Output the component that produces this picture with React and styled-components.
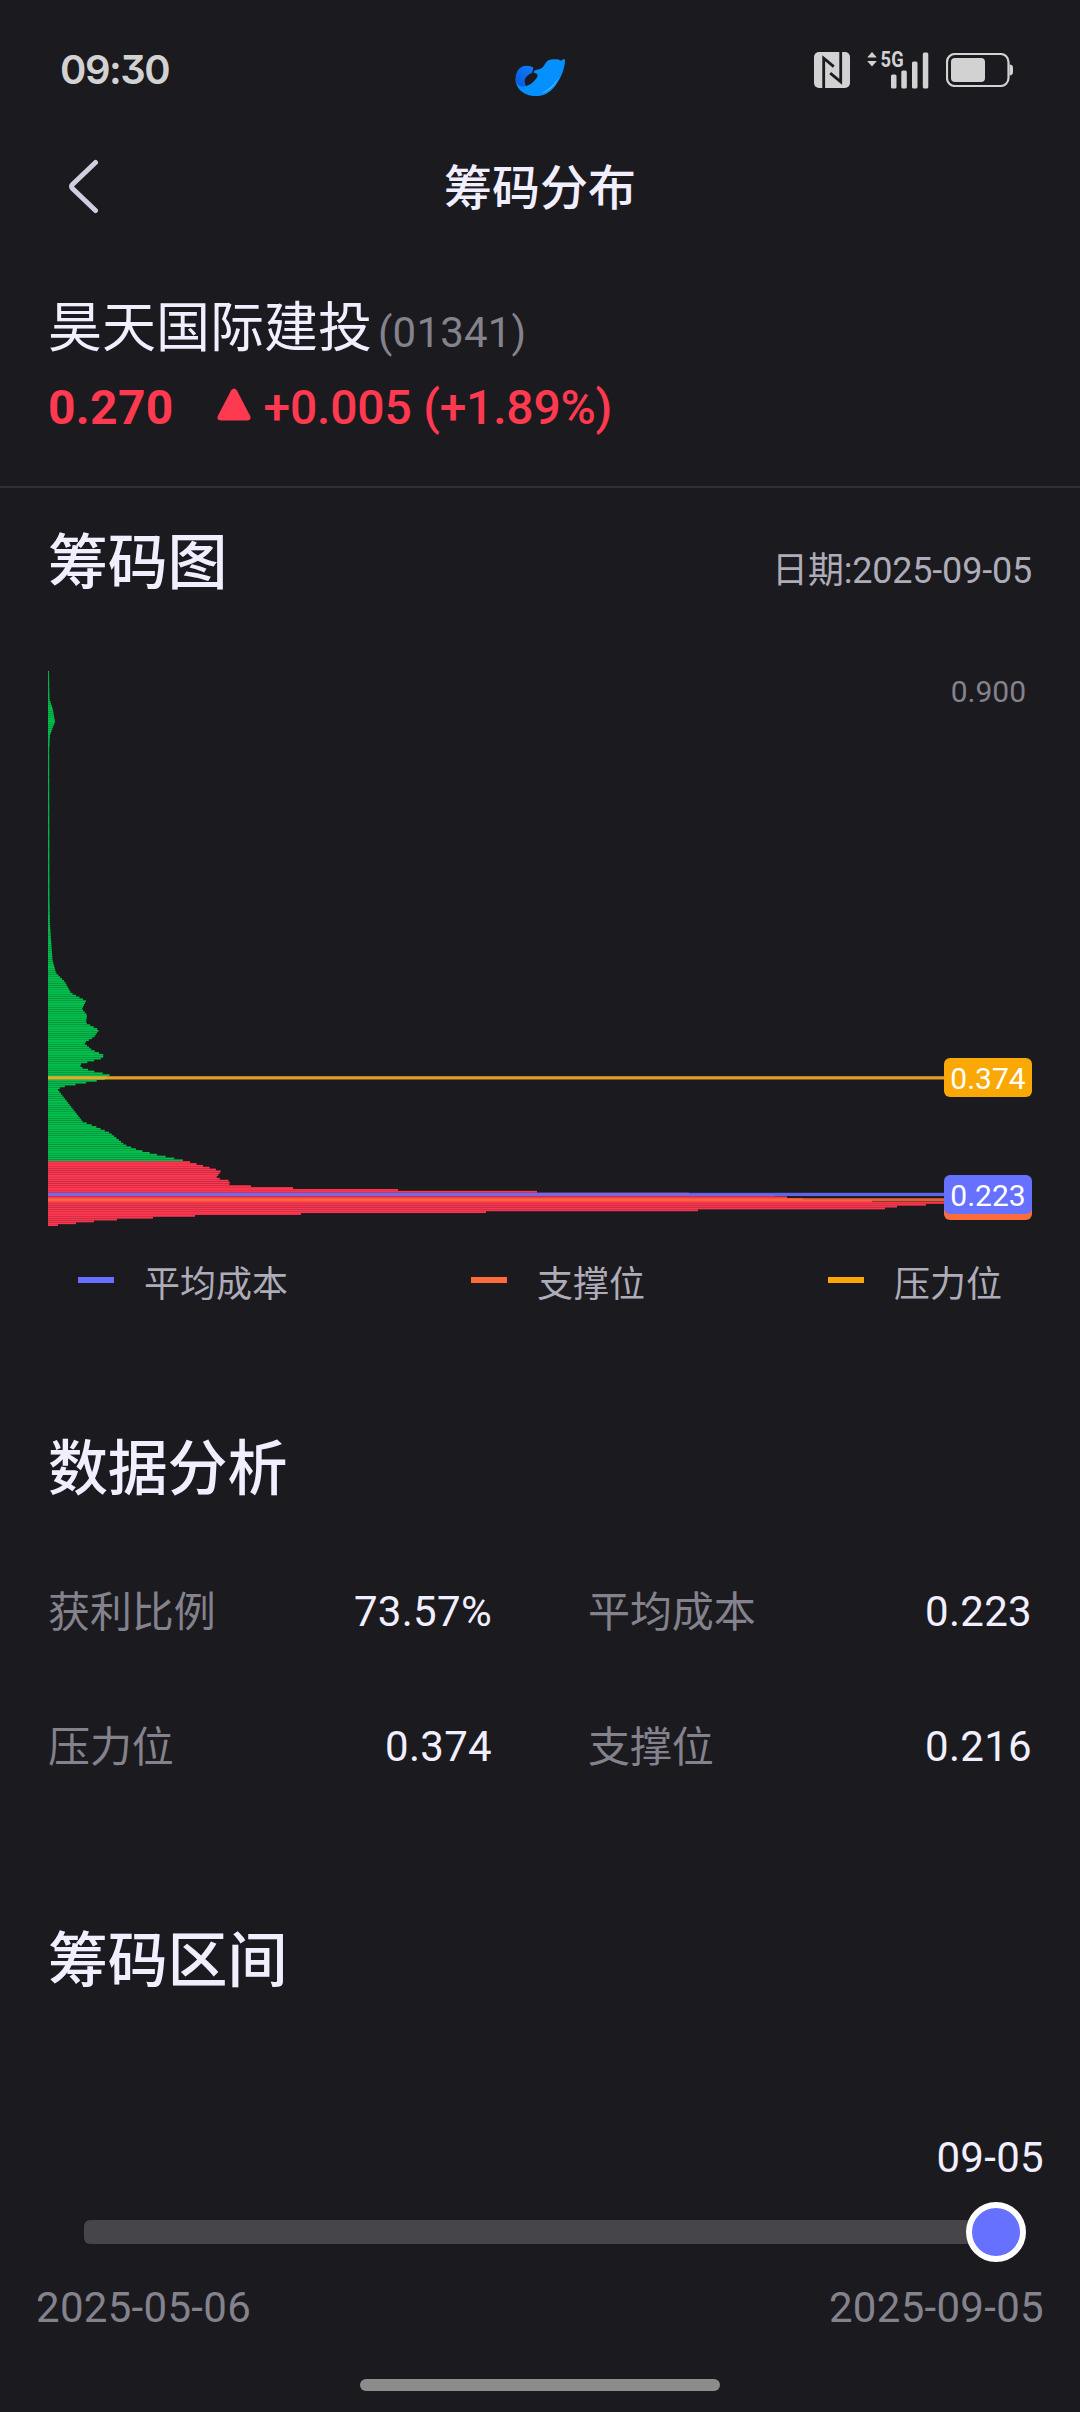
import React from "react";
import styled, { createGlobalStyle } from "styled-components";

// [offset from the chart top, bar length]
const profile = [
  [0, 1], [28, 1.5], [31, 2.5], [39, 5], [51, 7], [56, 5], [64, 2], [79, 1.2],
  [229, 1.5], [254, 2], [289, 4.5], [302, 8], [311, 17], [322, 23], [330, 38],
  [338, 34], [344, 39], [352, 38], [359, 51], [366, 46], [372, 36], [379, 44],
  [384, 55.5], [387, 55], [393, 33], [396, 32], [400, 44], [404, 62],
  [408.5, 56], [412, 36], [416, 13], [419, 10], [451, 35], [455, 46],
  [462, 62], [474, 77], [479, 90], [484, 110], [490, 138], [494, 152],
  [500, 173], [503, 171], [507, 168], [510, 182], [515, 181],
];

// the lowest prices, one length per bar
const tail = [
  203, 245, 350, 489, 641, 727, 739, 755, 824, 960, 878, 849, 837, 650, 438,
  253, 147, 105, 69, 46, 28, 10,
];

const BAR_COUNT = 300;
const PITCH = 555 / BAR_COUNT;
const SPLIT = 490;

const lengthAt = (y) => {
  const i = profile.findIndex((p) => p[0] >= y);
  if (i < 1) return profile[0][1];
  const [y0, w0] = profile[i - 1];
  const [y1, w1] = profile[i];
  return w0 + ((w1 - w0) * (y - y0)) / (y1 - y0);
};

const bars = Array.from({ length: BAR_COUNT }, (_, i) => {
  const y = i * PITCH;
  const t = i - (BAR_COUNT - tail.length);
  return {
    y,
    width: t >= 0 ? tail[t] : lengthAt(y + PITCH / 2),
    color: y < SPLIT ? "#04bf4b" : "#ff3650",
  };
});

const legend = [
  { label: "平均成本", color: "#6671ff" },
  { label: "支撑位", color: "#ff6b39" },
  { label: "压力位", color: "#faa805" },
];

const stats = [
  { label: "获利比例", value: "73.57%" },
  { label: "平均成本", value: "0.223" },
  { label: "压力位", value: "0.374" },
  { label: "支撑位", value: "0.216" },
];

function Logo() {
  return (
    <svg width="51" height="38" viewBox="0 0 51 38">
      <defs>
        <linearGradient id="tail" x1="0" y1="1" x2="0.7" y2="0">
          <stop offset="0" stopColor="#0a55e0" />
          <stop offset="1" stopColor="#0a7cf8" />
        </linearGradient>
      </defs>
      <path
        d="M50 0.2C50.4 9 45 22 38 29.5C32 36 25 37.6 18 37C7 36 0.5 28 0.5 20L8 26C10 28 14 26.500 17 24C20.500 21 23.500 17.500 22.300 15.600C21.500 14 19.500 14 18.500 13.500C19.500 10.500 22 10.800 25 10C29 8.500 29.500 4 33 1.500C36 -0.300 40 0.200 43 0.300C44.500 0.600 45 2 46.500 1.300C47.500 0.800 48 0.200 50 0.200Z"
        fill="#0490ff"
      />
      <path
        d="M0.500 20C0.500 12 5 7 11 6.700C14 6.600 17 7.500 18.500 8.700C17.500 10.500 18 12 16.800 14C13 15.500 10.500 18 9.800 21C9.500 23.500 10 25.500 11.500 27.300C5 28.500 1 26 0.500 20Z"
        fill="url(#tail)"
      />
      <path d="M45 17C40 27 33 33 26 34.500C33 31 40 25 45 17Z" fill="#5cb8ff" />
    </svg>
  );
}

function Nfc() {
  return (
    <svg width="36" height="36" viewBox="0 0 36 36">
      <rect width="36" height="36" rx="5" fill="#d2d2d2" />
      <path
        d="M9.700 36V6.200L19.800 14.600M26.700 0V29.800L16.200 21.200"
        fill="none"
        stroke="#1b1a1f"
        strokeWidth="2.800"
      />
    </svg>
  );
}

function Signal() {
  return (
    <svg width="62" height="54" viewBox="0 -8 62 54">
      <g fill="#d2d2d2">
        <path d="M5 1L9.800 6.500H0.200ZM5 15.500L0.200 10H9.800Z" />
        <rect x="24" y="23.500" width="5.500" height="14" rx="1.500" />
        <rect x="34.300" y="19.500" width="5.500" height="18" rx="1.500" />
        <rect x="45" y="10.500" width="5.500" height="27" rx="1.500" />
        <rect x="55.800" y="1.500" width="5.500" height="36" rx="1.500" />
        <text
          x="13.500"
          y="16.200"
          fontFamily="Roboto"
          fontWeight="700"
          fontSize="21.500"
          textLength="23.500"
          lengthAdjust="spacingAndGlyphs"
        >
          5G
        </text>
      </g>
    </svg>
  );
}

function Battery() {
  return (
    <svg width="68" height="34" viewBox="0 0 68 34">
      <rect x="1" y="1" width="61.500" height="32" rx="8" fill="none" stroke="#d2d2d2" strokeWidth="2.200" />
      <rect x="5" y="5" width="34" height="24" rx="4" fill="#d2d2d2" />
      <path d="M63.500 11.500C66 11.500 67 13 67 15V19C67 21 66 22.500 63.500 22.500Z" fill="#d2d2d2" />
    </svg>
  );
}

export default function App() {
  return (
    <>
      <GlobalStyle />
      <Screen>
        <StatusBar>
          <Clock>09:30</Clock>
          <Logo />
          <StatusIcons>
            <Nfc />
            <Signal />
            <Battery />
          </StatusIcons>
        </StatusBar>

        <Header>
          <BackButton aria-label="返回">
            <svg width="32" height="56" viewBox="0 0 32 56">
              <path
                d="M27.500 3.500L4.500 25.500Q2.700 27.500 4.500 29.500L27.500 51.500"
                fill="none"
                stroke="#d0cfe2"
                strokeWidth="5"
                strokeLinecap="round"
              />
            </svg>
          </BackButton>
          <h1>筹码分布</h1>
        </Header>

        <Stock>
          <StockName>
            昊天国际建投<span>(01341)</span>
          </StockName>
          <Quote>
            <strong>0.270</strong>
            <svg width="34" height="33" viewBox="0 0 34 33">
              <path
                d="M14.200 2.300Q17 -1.500 19.800 2.300L33.200 28Q34.600 32.500 30 32.500H4Q-0.600 32.500 0.800 28Z"
                fill="#ff3950"
              />
            </svg>
            <span>+0.005 (+1.89%)</span>
          </Quote>
        </Stock>

        <ChartHead>
          <Heading>筹码图</Heading>
          <DateText>日期:2025-09-05</DateText>
        </ChartHead>

        <ChartBox>
          <svg width="984" height="555" viewBox="0 0 984 555">
            {bars.map((b) => (
              <rect key={b.y} x="0" y={b.y} width={b.width} height={PITCH} fill={b.color} />
            ))}
            <rect y="405.200" width="900" height="3.300" fill="#faa92a" opacity="0.900" />
            <rect y="527.200" width="900" height="3.300" fill="#ff6b39" opacity="0.880" />
            <rect y="521.800" width="900" height="3.300" fill="#6671ff" opacity="0.880" />
          </svg>
          <MaxPrice>0.900</MaxPrice>
          <PriceTag $top={387} $color="#faa805">0.374</PriceTag>
          <PriceTag $top={510} $color="#ff6b39" />
          <PriceTag $top={504} $color="#6671ff">0.223</PriceTag>
        </ChartBox>

        <Legend>
          {legend.map((item) => (
            <LegendItem key={item.label} $color={item.color}>
              <i />
              {item.label}
            </LegendItem>
          ))}
        </Legend>

        <Section>
          <Heading>数据分析</Heading>
        </Section>
        <Stats>
          {stats.map((s) => (
            <Stat key={s.label}>
              <span>{s.label}</span>
              <b>{s.value}</b>
            </Stat>
          ))}
        </Stats>

        <Section>
          <Heading>筹码区间</Heading>
        </Section>
        <Range>
          <RangeValue>09-05</RangeValue>
          <Slider>
            <Track />
            <Thumb />
          </Slider>
          <RangeEnds>
            <span>2025-05-06</span>
            <span>2025-09-05</span>
          </RangeEnds>
        </Range>

        <HomeBar />
      </Screen>
    </>
  );
}

const GlobalStyle = createGlobalStyle`
  * {
    box-sizing: border-box;
  }
  body {
    margin: 0;
    background: #1b1a1f;
  }
`;

const Screen = styled.div`
  width: 1080px;
  height: 2412px;
  overflow: hidden;
  display: flex;
  flex-direction: column;
  background: #1b1a1f;
  color: #f1efff;
  font-family: Roboto, "Noto Sans CJK SC", sans-serif;
  font-size: 42px;
  letter-spacing: 0.3px;
  white-space: nowrap;
`;

const StatusBar = styled.div`
  height: 112px;
  padding: 28px 66px 0 60px;
  display: grid;
  grid-template-columns: 1fr 51px 1fr;
  align-items: center;

  > svg {
    margin-top: 16px;
    margin-left: 3px;
  }
`;

const Clock = styled.div`
  font-family: Inter, sans-serif;
  font-weight: 600;
  font-size: 40px;
  line-height: 48px;
  letter-spacing: -1.5px;
  font-feature-settings: "cv09";
  color: #d2d2d2;
`;

const StatusIcons = styled.div`
  display: flex;
  align-items: center;
  justify-content: flex-end;
  gap: 17px;
`;

const Header = styled.header`
  height: 150px;
  padding: 0 68px;
  display: grid;
  grid-template-columns: 32px 1fr 32px;
  align-items: center;

  h1 {
    margin: 0;
    padding-top: 3px;
    font-size: 48px;
    font-weight: 500;
    letter-spacing: 0;
    line-height: 60px;
    text-align: center;
  }
`;

const BackButton = styled.button`
  width: 32px;
  height: 56px;
  padding: 0;
  border: 0;
  background: none;
`;

const Stock = styled.div`
  height: 226px;
  padding: 32px 48px 0;
  border-bottom: 2px solid #313036;
`;

const StockName = styled.div`
  height: 78px;
  line-height: 70px;
  font-size: 54px;
  letter-spacing: 0;

  span {
    margin-left: 6px;
    font-size: 42px;
    letter-spacing: 0.2px;
    color: #83828d;
  }
`;

const Quote = styled.div`
  display: flex;
  align-items: center;
  font-size: 48px;
  line-height: 72px;
  color: #ff3950;

  strong {
    font-weight: 700;
  }

  svg {
    margin-left: 43px;
    margin-right: 13px;
    margin-bottom: 8px;
  }

  span {
    font-weight: 500;
    letter-spacing: -0.2px;
  }
`;

const ChartHead = styled.div`
  height: 183px;
  padding: 33px 48px 0;
  display: flex;
  justify-content: space-between;
  align-items: baseline;
`;

const Heading = styled.h2`
  margin: 0;
  font-size: 60px;
  font-weight: 500;
  letter-spacing: -0.2px;
  line-height: 86px;
`;

const DateText = styled.div`
  position: relative;
  top: -1px;
  font-size: 36px;
  letter-spacing: -0.2px;
  color: #adacb8;
`;

const ChartBox = styled.div`
  position: relative;
  height: 555px;
  margin: 0 48px;

  svg {
    display: block;
  }
`;

const MaxPrice = styled.div`
  position: absolute;
  right: 6px;
  top: 1px;
  font-size: 30px;
  line-height: 40px;
  letter-spacing: 0;
  color: #83828d;
`;

const PriceTag = styled.div`
  position: absolute;
  right: 0;
  top: ${(p) => p.$top}px;
  width: 88px;
  height: 39px;
  border-radius: 6px;
  background: ${(p) => p.$color};
  color: #fff;
  font-size: 30px;
  line-height: 41px;
  letter-spacing: 0;
  text-align: center;
`;

const Legend = styled.div`
  height: 110px;
  padding: 0 78px;
  display: flex;
  justify-content: space-between;
  align-items: center;
`;

const LegendItem = styled.div`
  display: flex;
  align-items: center;
  gap: 30px;
  font-size: 36px;
  letter-spacing: 0;
  color: #adacb8;

  i {
    width: 36px;
    height: 6px;
    margin-bottom: 2px;
    background: ${(p) => p.$color};
  }
`;

const Section = styled.div`
  height: 192px;
  padding: 91px 48px 0;
`;

const Stats = styled.div`
  height: 300px;
  padding: 48px 48px 0;
  display: grid;
  grid-template-columns: 1fr 1fr;
  grid-auto-rows: 72px;
  gap: 63px 96px;
`;

const Stat = styled.div`
  display: flex;
  justify-content: space-between;
  line-height: 72px;

  span {
    padding-top: 1px;
    letter-spacing: -0.1px;
    color: #83828d;
  }

  b {
    font-weight: 400;
  }
`;

const Range = styled.div`
  padding: 98px 36px 0;
`;

const RangeValue = styled.div`
  height: 84px;
  line-height: 79px;
  text-align: right;
`;

const Slider = styled.div`
  height: 60px;
  padding: 0 18px 0 48px;
  display: flex;
  align-items: center;
`;

const Track = styled.div`
  flex: 1;
  height: 24px;
  margin-right: -6px;
  border-radius: 6px;
  background: #464549;
`;

const Thumb = styled.div`
  position: relative;
  width: 60px;
  height: 60px;
  border: 6px solid #fff;
  border-radius: 50%;
  background: #6671ff;
`;

const RangeEnds = styled.div`
  display: flex;
  justify-content: space-between;
  margin-top: 10px;
  line-height: 72px;
  color: #83828d;
`;

const HomeBar = styled.div`
  width: 360px;
  height: 12px;
  margin: auto auto 21px;
  border-radius: 6px;
  background: #8c8c8c;
`;
